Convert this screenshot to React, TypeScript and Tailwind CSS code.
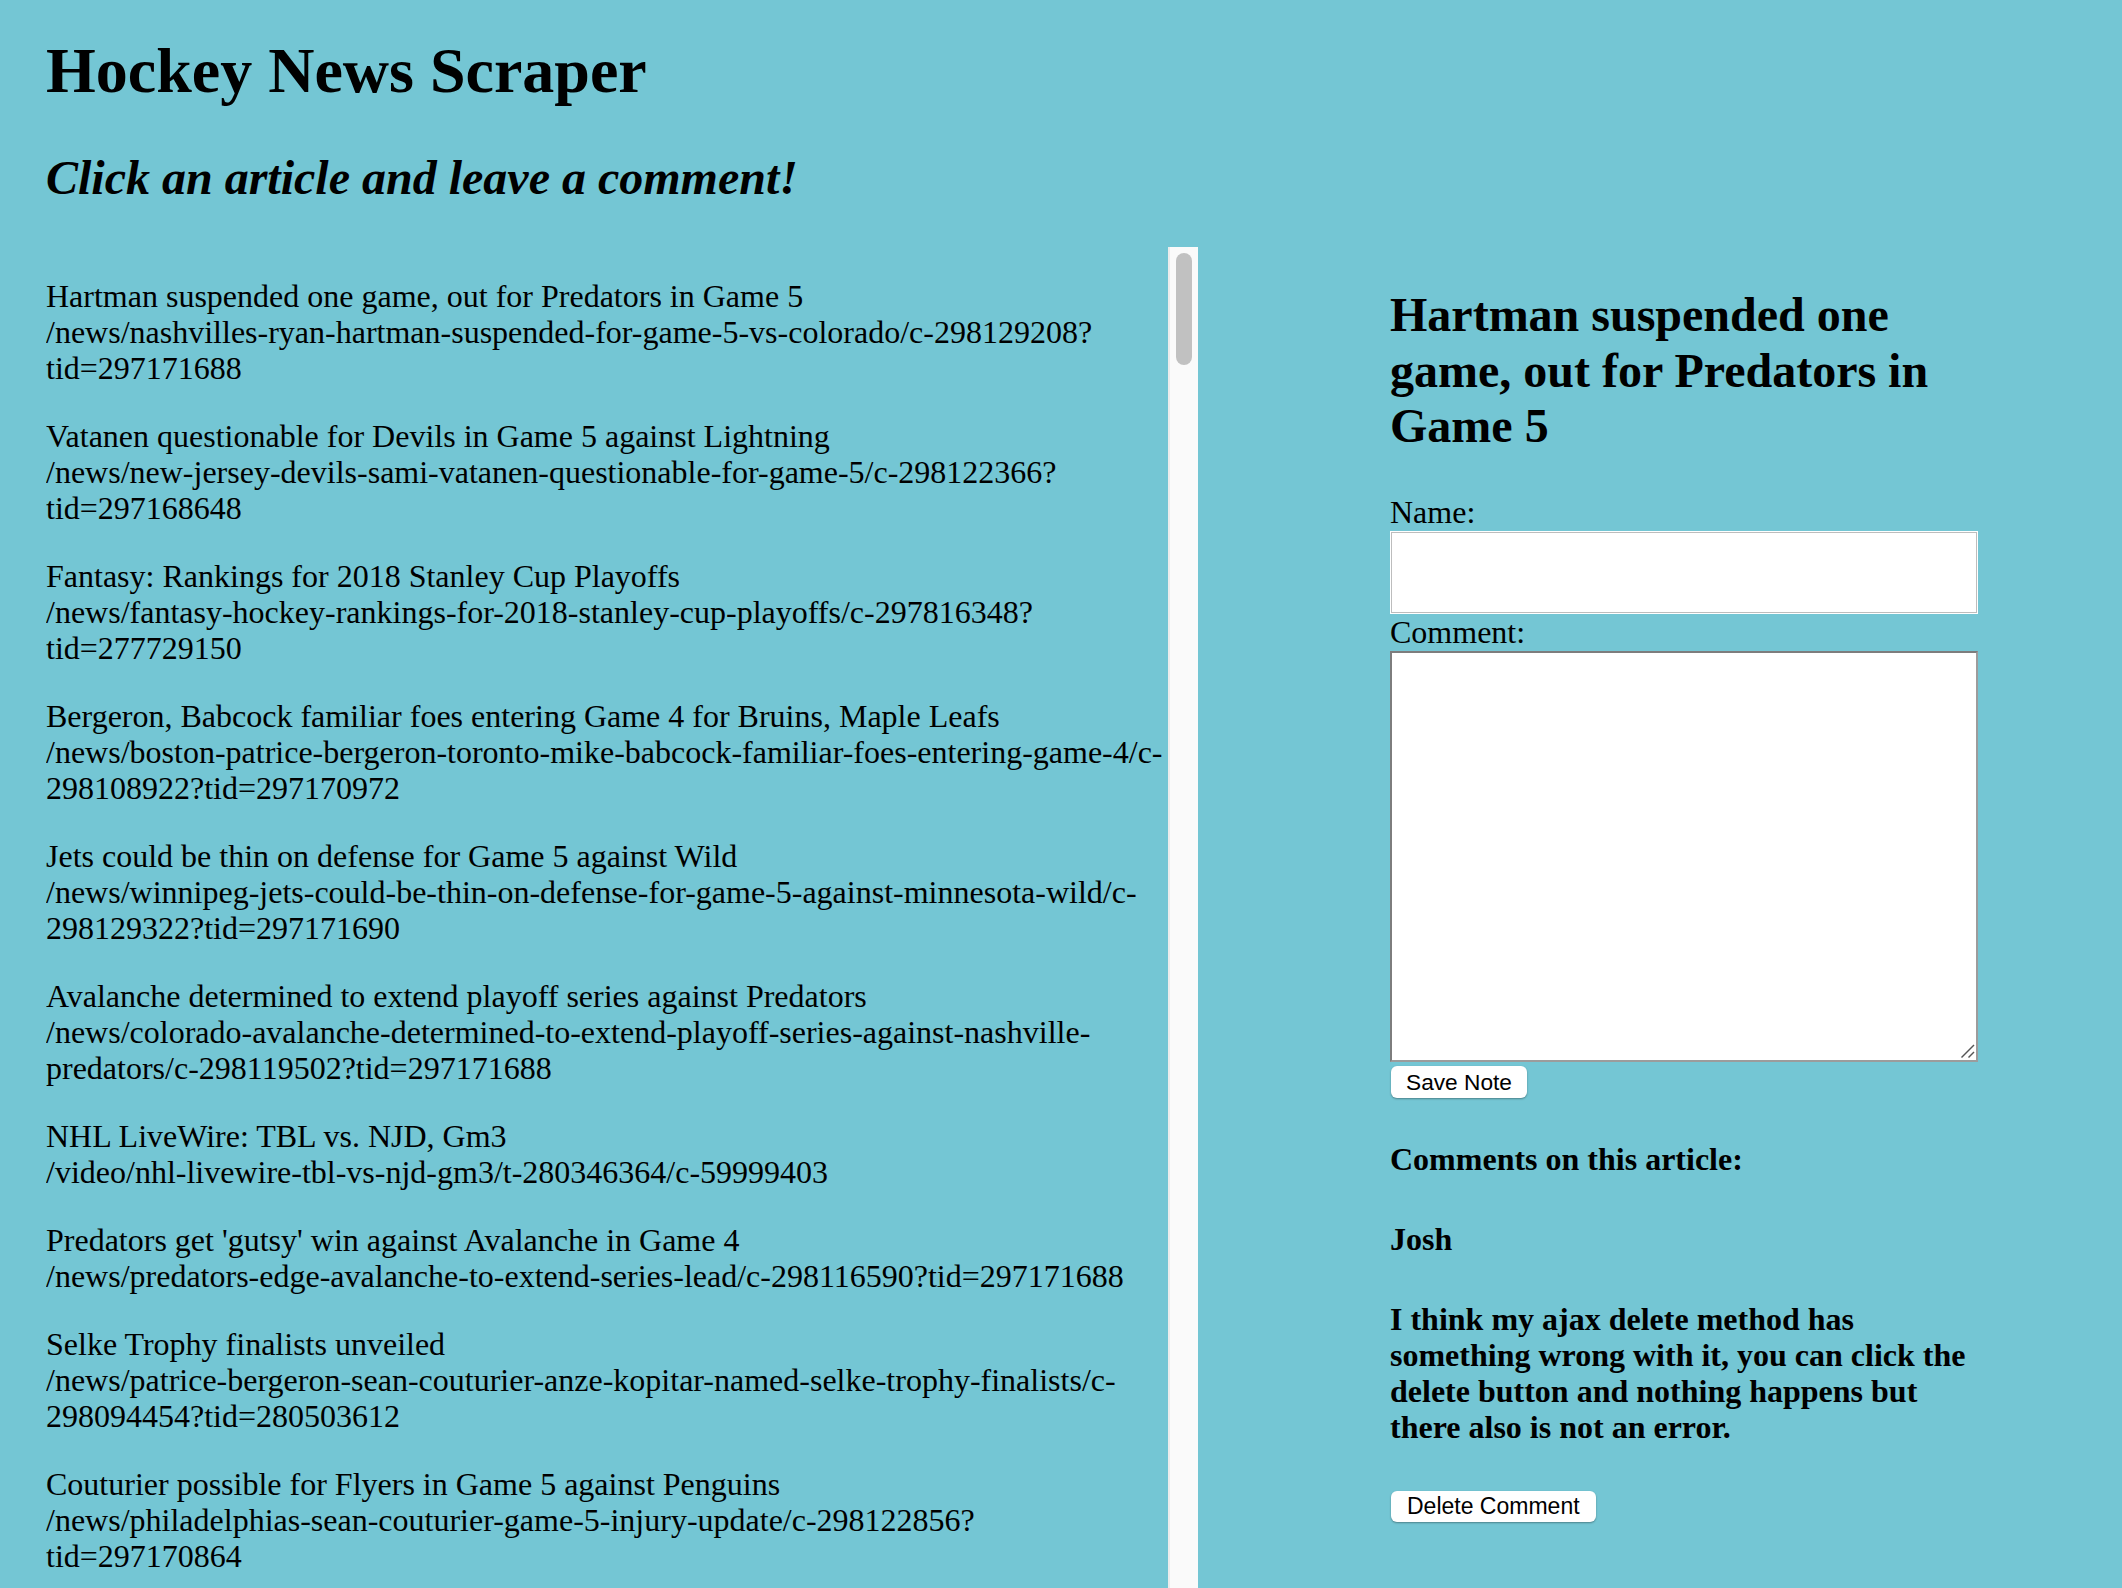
import React from "react";

const articles: string[][] = [
  [
    "Hartman suspended one game, out for Predators in Game 5",
    "/news/nashvilles-ryan-hartman-suspended-for-game-5-vs-colorado/c-298129208?",
    "tid=297171688",
  ],
  [
    "Vatanen questionable for Devils in Game 5 against Lightning",
    "/news/new-jersey-devils-sami-vatanen-questionable-for-game-5/c-298122366?",
    "tid=297168648",
  ],
  [
    "Fantasy: Rankings for 2018 Stanley Cup Playoffs",
    "/news/fantasy-hockey-rankings-for-2018-stanley-cup-playoffs/c-297816348?",
    "tid=277729150",
  ],
  [
    "Bergeron, Babcock familiar foes entering Game 4 for Bruins, Maple Leafs",
    "/news/boston-patrice-bergeron-toronto-mike-babcock-familiar-foes-entering-game-4/c-",
    "298108922?tid=297170972",
  ],
  [
    "Jets could be thin on defense for Game 5 against Wild",
    "/news/winnipeg-jets-could-be-thin-on-defense-for-game-5-against-minnesota-wild/c-",
    "298129322?tid=297171690",
  ],
  [
    "Avalanche determined to extend playoff series against Predators",
    "/news/colorado-avalanche-determined-to-extend-playoff-series-against-nashville-",
    "predators/c-298119502?tid=297171688",
  ],
  ["NHL LiveWire: TBL vs. NJD, Gm3", "/video/nhl-livewire-tbl-vs-njd-gm3/t-280346364/c-59999403"],
  [
    "Predators get 'gutsy' win against Avalanche in Game 4",
    "/news/predators-edge-avalanche-to-extend-series-lead/c-298116590?tid=297171688",
  ],
  [
    "Selke Trophy finalists unveiled",
    "/news/patrice-bergeron-sean-couturier-anze-kopitar-named-selke-trophy-finalists/c-",
    "298094454?tid=280503612",
  ],
  [
    "Couturier possible for Flyers in Game 5 against Penguins",
    "/news/philadelphias-sean-couturier-game-5-injury-update/c-298122856?",
    "tid=297170864",
  ],
];

export default function App() {
  return (
    <div className="w-[2122px] h-[1588px] overflow-hidden bg-[#74c6d4] text-black font-['Liberation_Serif','Times_New_Roman',serif]">
      <h1 className="ml-[46px] pt-[34px] text-[64px] leading-[74px] font-bold whitespace-nowrap">
        Hockey News Scraper
      </h1>
      <h2 className="ml-[46px] mt-[42px] text-[48px] leading-[55px] font-bold italic whitespace-nowrap">
        Click an article and leave a comment!
      </h2>
      <div className="mt-[42px] flex items-start">
        <div className="ml-[46px] w-[1122px] h-[1341px] overflow-hidden pt-[31px]">
          {articles.map((lines, i) => (
            <p key={i} className="mb-[32px] text-[32px] leading-[36px]">
              {lines.map((l, j) => (
                <span key={j} className="block whitespace-nowrap">
                  {l}
                </span>
              ))}
            </p>
          ))}
        </div>
        <div className="w-[30px] h-[1341px] bg-[#fafafa] border-l-2 border-[#ececec] pl-[6px] pt-[6px]">
          <div className="w-[16px] h-[112px] rounded-full bg-[#c1c1c1]" />
        </div>
        <div className="ml-[192px] w-[588px] flex flex-col items-start pt-[40px]">
          <h2 className="text-[48px] leading-[55.5px] font-bold whitespace-nowrap">
            Hartman suspended one
            <br />
            game, out for Predators in
            <br />
            Game 5
          </h2>
          <label className="mt-[40.5px] text-[32px] leading-[36px]">Name:</label>
          <input
            type="text"
            className="mt-[1px] w-[588px] h-[83px] bg-white border border-white shadow-[inset_0_0_0_1px_#bdbdbd] outline-none"
          />
          <label className="text-[32px] leading-[36px]">Comment:</label>
          <div className="relative mt-[1px] w-[588px] h-[411px]">
            <textarea className="block w-full h-full resize-none bg-white border-2 border-t-[#7d7d7d] border-l-[#7d7d7d] border-b-[#9c9c9c] border-r-[#9c9c9c] outline-none" />
            <svg
              className="absolute right-[3px] bottom-[3px]"
              width="16"
              height="16"
              viewBox="0 0 16 16"
            >
              <line x1="2.5" y1="14.5" x2="15" y2="2" stroke="#555" strokeWidth="1.4" />
              <line x1="9.5" y1="14.5" x2="15" y2="9" stroke="#555" strokeWidth="1.4" />
            </svg>
          </div>
          <button className="mt-[4px] ml-[1px] h-[32px] px-[15px] bg-white rounded-[6px] shadow-[0_1px_2px_rgba(0,0,0,0.35)] font-['Liberation_Sans',Arial,sans-serif] text-[22.7px] leading-[32px] text-black">
            Save Note
          </button>
          <h4 className="mt-[43px] text-[32px] leading-[36px] font-bold whitespace-nowrap">
            Comments on this article:
          </h4>
          <h4 className="mt-[44px] text-[32px] leading-[36px] font-bold">Josh</h4>
          <h4 className="mt-[43.5px] text-[32px] leading-[36px] font-bold whitespace-nowrap">
            I think my ajax delete method has
            <br />
            something wrong with it, you can click the
            <br />
            delete button and nothing happens but
            <br />
            there also is not an error.
          </h4>
          <button className="mt-[46px] ml-[1px] h-[31.5px] px-[16px] bg-white rounded-[6px] shadow-[0_1px_2px_rgba(0,0,0,0.35)] font-['Liberation_Sans',Arial,sans-serif] text-[23px] leading-[31.5px] text-black">
            Delete Comment
          </button>
        </div>
      </div>
    </div>
  );
}
